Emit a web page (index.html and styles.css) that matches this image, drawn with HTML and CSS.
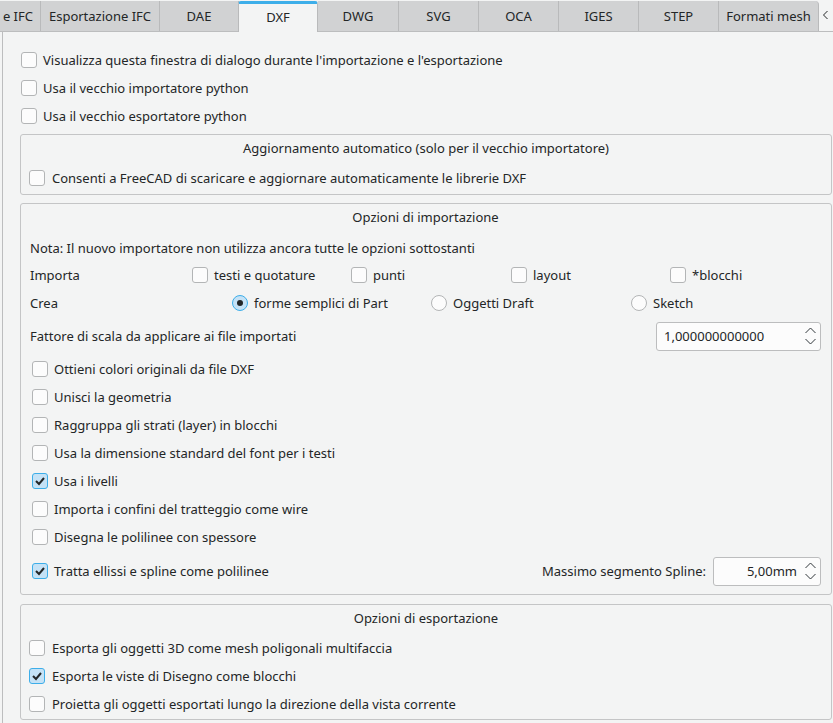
FILE: index.html
```html
<!DOCTYPE html>
<html lang="it">
<head>
<meta charset="utf-8">
<title>DXF</title>
<link rel="stylesheet" href="styles.css">
</head>
<body>
<div class="tabbar">
  <div class="tab t-first">e IFC</div>
  <div class="tab t-esp">Esportazione IFC</div>
  <div class="tab t-dae">DAE</div>
  <div class="tab t-sel">DXF</div>
  <div class="tab t-dwg">DWG</div>
  <div class="tab t-80">SVG</div>
  <div class="tab t-80">OCA</div>
  <div class="tab t-80">IGES</div>
  <div class="tab t-80">STEP</div>
  <div class="tab t-last">Formati mesh</div>
  <div class="scroll"><svg width="7" height="10" viewBox="0 0 7 10"><polyline points="5.5,1 1.5,5 5.5,9" fill="none" stroke="#232627" stroke-width="1"/></svg></div>
</div>
<div class="panel">
  <div class="row top"><span class="cb"></span>Visualizza questa finestra di dialogo durante l'importazione e l'esportazione</div>
  <div class="row top"><span class="cb"></span>Usa il vecchio importatore python</div>
  <div class="row top"><span class="cb"></span>Usa il vecchio esportatore python</div>

  <div class="group g1">
    <div class="gtitle">Aggiornamento automatico (solo per il vecchio importatore)</div>
    <div class="row g1row"><span class="cb"></span>Consenti a FreeCAD di scaricare e aggiornare automaticamente le librerie DXF</div>
  </div>

  <div class="group g2">
    <div class="gtitle">Opzioni di importazione</div>
    <div class="line nota">Nota: Il nuovo importatore non utilizza ancora tutte le opzioni sottostanti</div>
    <div class="line grid-imp">
      <span>Importa</span>
      <span class="opt"><span class="cb"></span>testi e quotature</span>
      <span class="opt"><span class="cb"></span>punti</span>
      <span class="opt"><span class="cb"></span>layout</span>
      <span class="opt"><span class="cb"></span>*blocchi</span>
    </div>
    <div class="line grid-crea">
      <span>Crea</span>
      <span class="opt"><span class="rb on"></span>forme semplici di Part</span>
      <span class="opt"><span class="rb"></span>Oggetti Draft</span>
      <span class="opt"><span class="rb"></span>Sketch</span>
    </div>
    <div class="line scale">
      <span>Fattore di scala da applicare ai file importati</span>
      <div class="spin wide"><span class="val">1,000000000000</span><svg class="arr" width="11" height="27" viewBox="0 0 11 27"><polyline points="0.5,10 5.5,5 10.5,10" fill="none" stroke="#31363b" stroke-width="1"/><polyline points="0.5,16 5.5,21 10.5,16" fill="none" stroke="#31363b" stroke-width="1"/></svg></div>
    </div>
    <div class="row g2row"><span class="cb"></span>Ottieni colori originali da file DXF</div>
    <div class="row g2row"><span class="cb"></span>Unisci la geometria</div>
    <div class="row g2row"><span class="cb"></span>Raggruppa gli strati (layer) in blocchi</div>
    <div class="row g2row"><span class="cb"></span>Usa la dimensione standard del font per i testi</div>
    <div class="row g2row"><span class="cb on"><svg width="14" height="14" viewBox="0 0 14 14"><polyline points="3,7 6,10 11,4" fill="none" stroke="#232627" stroke-width="2"/></svg></span>Usa i livelli</div>
    <div class="row g2row"><span class="cb"></span>Importa i confini del tratteggio come wire</div>
    <div class="row g2row"><span class="cb"></span>Disegna le polilinee con spessore</div>
    <div class="row g2row spline">
      <span class="cb on"><svg width="14" height="14" viewBox="0 0 14 14"><polyline points="3,7 6,10 11,4" fill="none" stroke="#232627" stroke-width="2"/></svg></span>Tratta ellissi e spline come polilinee
      <span class="splabel">Massimo segmento Spline:</span>
      <div class="spin narrow"><span class="val">5,00mm</span><svg class="arr" width="11" height="27" viewBox="0 0 11 27"><polyline points="0.5,10 5.5,5 10.5,10" fill="none" stroke="#31363b" stroke-width="1"/><polyline points="0.5,16 5.5,21 10.5,16" fill="none" stroke="#31363b" stroke-width="1"/></svg></div>
    </div>
  </div>

  <div class="group g3">
    <div class="gtitle">Opzioni di esportazione</div>
    <div class="row g3row first"><span class="cb"></span>Esporta gli oggetti 3D come mesh poligonali multifaccia</div>
    <div class="row g3row"><span class="cb on"><svg width="14" height="14" viewBox="0 0 14 14"><polyline points="3,7 6,10 11,4" fill="none" stroke="#232627" stroke-width="2"/></svg></span>Esporta le viste di Disegno come blocchi</div>
    <div class="row g3row"><span class="cb"></span>Proietta gli oggetti esportati lungo la direzione della vista corrente</div>
  </div>
</div>
</body>
</html>
```
FILE: styles.css
```css
* { box-sizing: border-box; }
html, body { margin: 0; padding: 0; }
body {
  width: 833px;
  height: 723px;
  overflow: hidden;
  background: #f3f4f4;
  font-family: "Noto Sans", "DejaVu Sans", sans-serif;
  font-size: 13px;
  color: #232627;
}
.tabbar {
  display: flex;
  align-items: flex-start;
  height: 32px;
  border-bottom: 1px solid #bcbdbe;
}
.tab {
  height: 30px;
  margin-top: 1px;
  background: #d1d2d3;
  border-right: 1px solid #b9babb;
  display: flex;
  align-items: center;
  justify-content: center;
  white-space: nowrap;
  flex: none;
}
.t-first { width: 41px; justify-content: flex-end; padding-right: 7px; }
.t-esp { width: 119px; }
.t-dae { width: 79px; }
.t-sel {
  width: 80px;
  height: 31px;
  background: #f3f4f4;
  border-top: 3px solid #3daee9;
  border-radius: 3px 3px 0 0;
  border-left: 1px solid #b9babb;
  margin-left: -1px;
  padding-bottom: 2px;
}
.t-dwg { width: 81px; }
.t-80 { width: 80px; }
.t-last { width: 100px; border-top-right-radius: 4px; }
.scroll {
  flex: none;
  width: 13px;
  height: 30px;
  display: flex;
  align-items: center;
  justify-content: center;
}
.panel {
  margin-left: 2px;
  border-left: 1px solid #bcbdbe;
  padding: 14px 0 0 17px;
  height: 691px;
}
.row {
  display: flex;
  align-items: center;
  height: 28px;
  gap: 6px;
  white-space: nowrap;
}
.row.top { padding-left: 1px; }
.cb {
  flex: none;
  width: 16px;
  height: 16px;
  border: 1px solid #b3b5b6;
  border-radius: 3px;
  background: #fcfcfc;
  display: flex;
  align-items: center;
  justify-content: center;
}
.cb.on {
  background: #c5e2f6;
  border-color: #3daee9;
}
.rb {
  flex: none;
  width: 16px;
  height: 16px;
  border: 1px solid #b3b5b6;
  border-radius: 50%;
  background: #fcfcfc;
  display: flex;
  align-items: center;
  justify-content: center;
}
.rb.on {
  background: #c5e2f6;
  border-color: #3daee9;
}
.rb.on::after {
  content: "";
  width: 6px;
  height: 6px;
  border-radius: 50%;
  background: #232627;
}
.group {
  width: 812px;
  border: 1px solid #c4c5c6;
  border-radius: 3px;
}
.gtitle {
  height: 26px;
  display: flex;
  align-items: center;
  justify-content: center;
}
.g1 { margin-top: 4px; padding-bottom: 2px; }
.g1row { margin-top: 3px; padding-left: 8px; gap: 7px; }
.g2 { margin-top: 8px; padding: 0 10px 3px 9px; }
.line {
  display: flex;
  align-items: center;
  white-space: nowrap;
}
.nota { height: 27px; margin-top: 4px; }
.grid-imp {
  display: grid;
  grid-template-columns: 162px 159px 160px 159px 1fr;
  align-items: center;
  height: 28px;
}
.grid-crea {
  display: grid;
  grid-template-columns: 202px 199px 200px 1fr;
  align-items: center;
  height: 28px;
}
.opt { display: flex; align-items: center; gap: 6px; }
.scale { height: 38px; justify-content: space-between; }
.g2row { padding-left: 2px; }
.spline { height: 40px; }
.splabel { margin-left: auto; margin-right: 1px; }
.spin {
  flex: none;
  height: 29px;
  border: 1px solid #bcbdbe;
  border-radius: 3px;
  background: #fcfcfc;
  display: flex;
  align-items: center;
}
.spin .arr { flex: none; margin-right: 4px; }
.spin .val { flex: 1; }
.wide { width: 165px; padding-left: 7px; }
.narrow { width: 108px; }
.narrow .val { text-align: right; padding-right: 8px; }
.g3 { margin-top: 9px; padding-bottom: 1px; }
.g3row { padding-left: 8px; gap: 7px; }
.g3row.first { margin-top: 3px; }
```
